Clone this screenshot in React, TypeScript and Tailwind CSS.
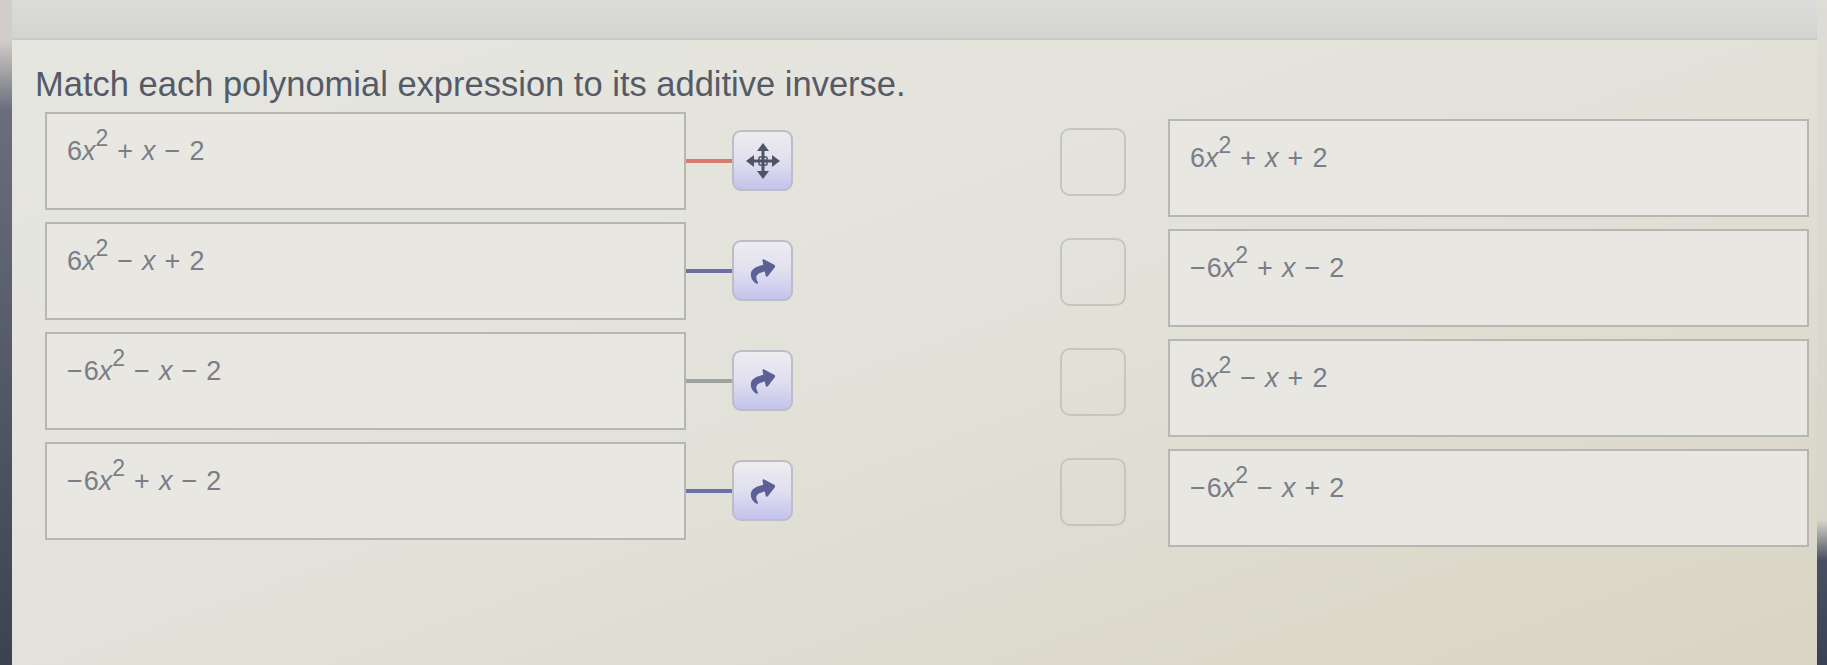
import React from 'react';
import { FaShare } from 'react-icons/fa';

type Term = { sign: '' | '-'; mid: '+' | '-'; last: '+' | '-' };

interface Pair {
  id: number;
  left: Term;
  right: Term;
  lineColor: string;
  grabbed?: boolean;
}

const pairs: Pair[] = [
  { id: 1, left: { sign: '', mid: '+', last: '-' }, right: { sign: '', mid: '+', last: '+' }, lineColor: 'bg-[#d97a70]', grabbed: true },
  { id: 2, left: { sign: '', mid: '-', last: '+' }, right: { sign: '-', mid: '+', last: '-' }, lineColor: 'bg-[#6c6fa8]' },
  { id: 3, left: { sign: '-', mid: '-', last: '-' }, right: { sign: '', mid: '-', last: '+' }, lineColor: 'bg-[#9ea39f]' },
  { id: 4, left: { sign: '-', mid: '+', last: '-' }, right: { sign: '-', mid: '-', last: '+' }, lineColor: 'bg-[#6b72a8]' },
];

const op = (s: '+' | '-') => (s === '-' ? '\u2212' : '+');

// 6x^2 ± x ± 2 with the leading sign
const Poly: React.FC<{ term: Term }> = ({ term }) => (
  <span className="inline-flex items-baseline text-[27px] leading-none text-[#7a7e88]">
    {term.sign === '-' && <span className="mr-[1px]">{'\u2212'}</span>}
    <span>6</span>
    <span className="italic">x</span>
    <span className="relative -top-[14px] text-[23px]">2</span>
    <span className="mx-[9px]">{op(term.mid)}</span>
    <span className="italic">x</span>
    <span className="mx-[9px]">{op(term.last)}</span>
    <span>2</span>
  </span>
);

const ExprBox: React.FC<{ term: Term; className?: string }> = ({ term, className }) => (
  <div className={`w-[641px] h-[98px] shrink-0 border-2 border-[#b7b7b1] bg-[#e8e7e1] pl-[20px] pt-[24px] ${className ?? ''}`}>
    <Poly term={term} />
  </div>
);

const MoveIcon = () => (
  <svg width="34" height="36" viewBox="0 0 34 36" fill="#4e5466">
    <rect x="15.5" y="6" width="3" height="24" />
    <rect x="5" y="16.5" width="24" height="3" />
    <polygon points="17,0 11,8 23,8" />
    <polygon points="17,36 11,28 23,28" />
    <polygon points="0,18 8,12 8,24" />
    <polygon points="34,18 26,12 26,24" />
    <rect x="13" y="14" width="8" height="8" rx="1" fill="none" stroke="#4e5466" strokeWidth="1.5" />
  </svg>
);

const Handle: React.FC<{ grabbed?: boolean }> = ({ grabbed }) => (
  <div className="w-[61px] h-[61px] shrink-0 mt-[18px] rounded-[9px] border-2 border-[#bdbdc6] bg-gradient-to-b from-[#ececf0] via-[#e1e0ef] to-[#c4c3eb] flex items-center justify-center">
    {grabbed ? <MoveIcon /> : <FaShare className="text-[#5b6196] -rotate-12" size={26} />}
  </div>
);

export default function App() {
  return (
    <div className="w-[1827px] h-[665px] flex overflow-hidden bg-gradient-to-br from-[#e6e6e1] via-[#e3e2da] to-[#d9d5c4]" style={{ fontFamily: '"Liberation Sans", Arial, sans-serif' }}>
      <div className="w-[12px] shrink-0 bg-[linear-gradient(to_bottom,#d2cdca_0px,#d2cdca_40px,#6a6e7c_110px,#3c4252_100%)]" />
      <div className="flex-1 flex flex-col">
        <div className="h-[40px] shrink-0 bg-gradient-to-b from-[#dcdcda] to-[#d3d3d0] border-b-2 border-[#c9c9c5]" />
        <h1 className="ml-[23px] mt-[24px] text-[34.5px] leading-[40px] text-[#555a67]">
          Match each polynomial expression to its additive inverse.
        </h1>
        <div className="ml-[33px] mt-[8px] flex flex-col gap-[5px]">
          {pairs.map((p) => (
            <div key={p.id} className="flex items-start">
              <ExprBox term={p.left} />
              <div className={`w-[46px] h-[4px] mt-[47px] shrink-0 ${p.lineColor}`} />
              <Handle grabbed={p.grabbed} />
              <div className="w-[267px] shrink-0" />
              <div className="w-[66px] h-[68px] mt-[16px] shrink-0 rounded-[10px] border-2 border-[#c6c6c1]" />
              <div className="w-[42px] shrink-0" />
              <ExprBox term={p.right} className="mt-[7px]" />
            </div>
          ))}
        </div>
      </div>
      <div className="w-[10px] shrink-0 bg-[linear-gradient(to_bottom,#dedcd6_0px,#d8d5ca_520px,#4a5062_560px,#3a4254_100%)]" />
    </div>
  );
}
